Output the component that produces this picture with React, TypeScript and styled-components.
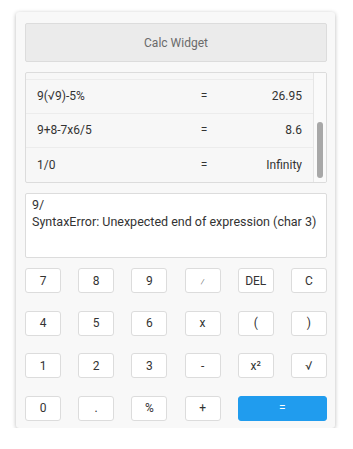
import React, { useState } from 'react';
import styled, { createGlobalStyle } from 'styled-components';

const GlobalStyle = createGlobalStyle`
  body {
    margin: 0;
    background: #ffffff;
    font-family: Roboto, "Liberation Sans", sans-serif;
  }
`

type Entry = {
  expr: string;
  result: string;
}

const Card = styled.div`
  box-sizing: border-box;
  width: 319px;
  margin: 12px 0 0 16px;
  padding: 11px 8px 7px 9px;
  background: #f8f8f8;
  border-radius: 3px;
  box-shadow: 0 1px 4px rgba(0, 0, 0, 0.28);
  display: flex;
  flex-direction: column;
  gap: 10px;
`

const Title = styled.div`
  height: 37px;
  display: flex;
  align-items: center;
  justify-content: center;
  background: #ebebeb;
  border: 1px solid #dcdcdc;
  border-radius: 2px;
  color: #6a6a6a;
  font-size: 12px;
`

const History = styled.div`
  height: 109px;
  display: flex;
  overflow: hidden;
  background: #f7f7f7;
  border: 1px solid #dcdcdc;
  border-radius: 2px;
`

const HistoryList = styled.div`
  flex: 1;
  display: flex;
  flex-direction: column;
`

// bottom of the entry scrolled out of view
const ScrolledEdge = styled.div`
  height: 6px;
  border-bottom: 1px solid #ececec;
`

const HistoryRow = styled.div`
  height: 35px;
  box-sizing: border-box;
  display: grid;
  grid-template-columns: 1fr 20px 88px;
  align-items: center;
  padding: 0 11px;
  border-bottom: 1px solid #ececec;
  font-size: 12px;
  color: #333;

  &:last-child {
    border-bottom: none;
  }
`

const Cell = styled.span<{ $align: 'left' | 'center' | 'right' }>`
  text-align: ${p => p.$align};
  white-space: nowrap;
`

const ScrollTrack = styled.div`
  width: 12px;
  background: #fafafa;
  border-left: 1px solid #e6e6e6;
  display: flex;
  justify-content: center;
`

const ScrollThumb = styled.div<{ $top: number; $size: number }>`
  width: 6px;
  height: ${p => p.$size}px;
  margin-top: ${p => p.$top}px;
  background: #a8a8a8;
  border-radius: 3px;
`

const Output = styled.div`
  height: 65px;
  box-sizing: border-box;
  padding: 2px 6px;
  background: #ffffff;
  border: 1px solid #dcdcdc;
  border-radius: 2px;
  font-size: 12.5px;
  line-height: 17px;
  color: #333;
`

const Keypad = styled.div`
  display: grid;
  grid-template-columns: repeat(6, 36px);
  justify-content: space-between;
  row-gap: 17.5px;
`

const Key = styled.button<{ $primary?: boolean; $wide?: boolean }>`
  height: 25px;
  padding: 0;
  box-sizing: border-box;
  grid-column: ${p => (p.$wide ? 'span 2' : 'auto')};
  background: ${p => (p.$primary ? '#209cee' : '#ffffff')};
  border: 1px solid ${p => (p.$primary ? '#209cee' : '#dcdcdc')};
  border-radius: 3px;
  color: ${p => (p.$primary ? '#ffffff' : '#333')};
  font-family: Roboto, "Liberation Sans", sans-serif;
  font-size: 12px;
  cursor: pointer;
`

const SmallSlash = styled.span`
  font-size: 9px;
  color: #666;
`

const keys: Array<string> = [
  '7', '8', '9', '/', 'DEL', 'C',
  '4', '5', '6', 'x', '(', ')',
  '1', '2', '3', '-', 'x²', '√',
  '0', '.', '%', '+',
]

const App = () => {
  const [history] = useState<Array<Entry>>([
    { expr: '9(√9)-5%', result: '26.95' },
    { expr: '9+8-7x6/5', result: '8.6' },
    { expr: '1/0', result: 'Infinity' },
  ]);

  return (
    <>
      <GlobalStyle />
      <Card>
        <Title>Calc Widget</Title>
        <History>
          <HistoryList>
            <ScrolledEdge />
            {history.map((entry, i) => (
              <HistoryRow key={i}>
                <Cell $align="left">{entry.expr}</Cell>
                <Cell $align="center">=</Cell>
                <Cell $align="right">{entry.result}</Cell>
              </HistoryRow>
            ))}
          </HistoryList>
          <ScrollTrack>
            <ScrollThumb $top={49} $size={56} />
          </ScrollTrack>
        </History>
        <Output>
          <div>9/</div>
          <div>SyntaxError: Unexpected end of expression (char 3)</div>
        </Output>
        <Keypad>
          {keys.map(k => (
            <Key key={k}>{k === '/' ? <SmallSlash>⁄</SmallSlash> : k}</Key>
          ))}
          <Key $primary $wide>=</Key>
        </Keypad>
      </Card>
    </>
  );
}

export default App;
